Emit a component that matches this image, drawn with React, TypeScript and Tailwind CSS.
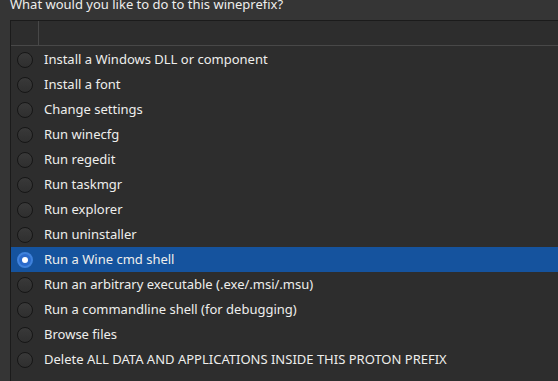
import React from 'react'

const ITEMS = [
    'Install a Windows DLL or component',
    'Install a font',
    'Change settings',
    'Run winecfg',
    'Run regedit',
    'Run taskmgr',
    'Run explorer',
    'Run uninstaller',
    'Run a Wine cmd shell',
    'Run an arbitrary executable (.exe/.msi/.msu)',
    'Run a commandline shell (for debugging)',
    'Browse files',
    'Delete ALL DATA AND APPLICATIONS INSIDE THIS PROTON PREFIX',
]

const SELECTED = 8

function Radio({ checked }: { checked: boolean }) {
    if (checked) {
        return (
            <span className="flex items-center justify-center w-4 h-4 rounded-full bg-[#2a6acb] border-2 border-[#3f82dc] shrink-0">
                <span className="w-[6px] h-[6px] rounded-full bg-white" />
            </span>
        )
    }
    return (
        <span className="w-4 h-4 rounded-full border border-[#161616] bg-gradient-to-b from-[#393939] to-[#2f2f2f] shrink-0" />
    )
}

export default function App() {
    return (
        <div className="w-[558px] h-[381px] overflow-hidden bg-[#353535] text-[#eeeeec] font-['Noto_Sans',sans-serif] text-[13px]">
            <div className="h-[20px] leading-[20px] -mt-[6px] pl-[10px] whitespace-nowrap">
                What would you like to do to this wineprefix?
            </div>
            <div className="ml-[10px] mt-[6px] h-[361px] border-l border-t border-[#1b1b1b] bg-[#2d2d2d]">
                <div className="flex h-[25px] border-b border-[#484848]">
                    <div className="w-[28px] border-r border-[#484848]" />
                    <div className="flex-1" />
                </div>
                <div className="pt-[1px]">
                    {ITEMS.map((label, i) => (
                        <div
                            key={label}
                            className={`flex items-center h-[25px] pl-[6px] gap-[11px] ${i === SELECTED ? 'bg-[#15539e]' : ''}`}
                        >
                            <Radio checked={i === SELECTED} />
                            <span className="whitespace-nowrap">{label}</span>
                        </div>
                    ))}
                </div>
            </div>
        </div>
    )
}
